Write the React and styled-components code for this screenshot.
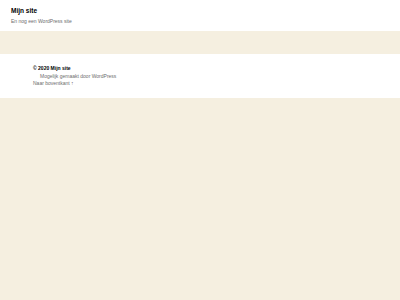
import React from "react";
import styled, { createGlobalStyle } from "styled-components";

const GlobalStyle = createGlobalStyle`
  html, body { margin: 0; padding: 0; }
  body {
    background: #f5efe0;
    font-family: "Liberation Sans", Arial, sans-serif;
    color: #000;
  }
`;

const Header = styled.header`
  background: #fff;
  height: 31px;
  padding: 7px 0 0 11px;
  box-sizing: border-box;
`;

const Title = styled.div`
  font-size: 6.5px;
  font-weight: 700;
  line-height: 8px;
`;

const Tagline = styled.div`
  margin-top: 3px;
  font-size: 5px;
  line-height: 6px;
  color: #6d6d6d;
`;

const Band = styled.div`
  height: 23px;
  background: #f5efe0;
`;

const Footer = styled.footer`
  background: #fff;
  height: 44px;
  padding: 11px 0 0 33px;
  box-sizing: border-box;
  font-size: 5px;
  line-height: 7.5px;
`;

const Line = styled.div`
  color: ${(p) => (p.$strong ? "#000" : "#6d6d6d")};
  font-weight: ${(p) => (p.$strong ? 700 : 400)};
  padding-left: ${(p) => (p.$indent ? "7px" : "0")};
`;

export default function App() {
  return (
    <>
      <GlobalStyle />
      <Header>
        <Title>Mijn site</Title>
        <Tagline>En nog een WordPress site</Tagline>
      </Header>
      <Band />
      <Footer>
        <Line $strong>© 2020 Mijn site</Line>
        <Line $indent>Mogelijk gemaakt door WordPress</Line>
        <Line>Naar boventkant ↑</Line>
      </Footer>
    </>
  );
}
